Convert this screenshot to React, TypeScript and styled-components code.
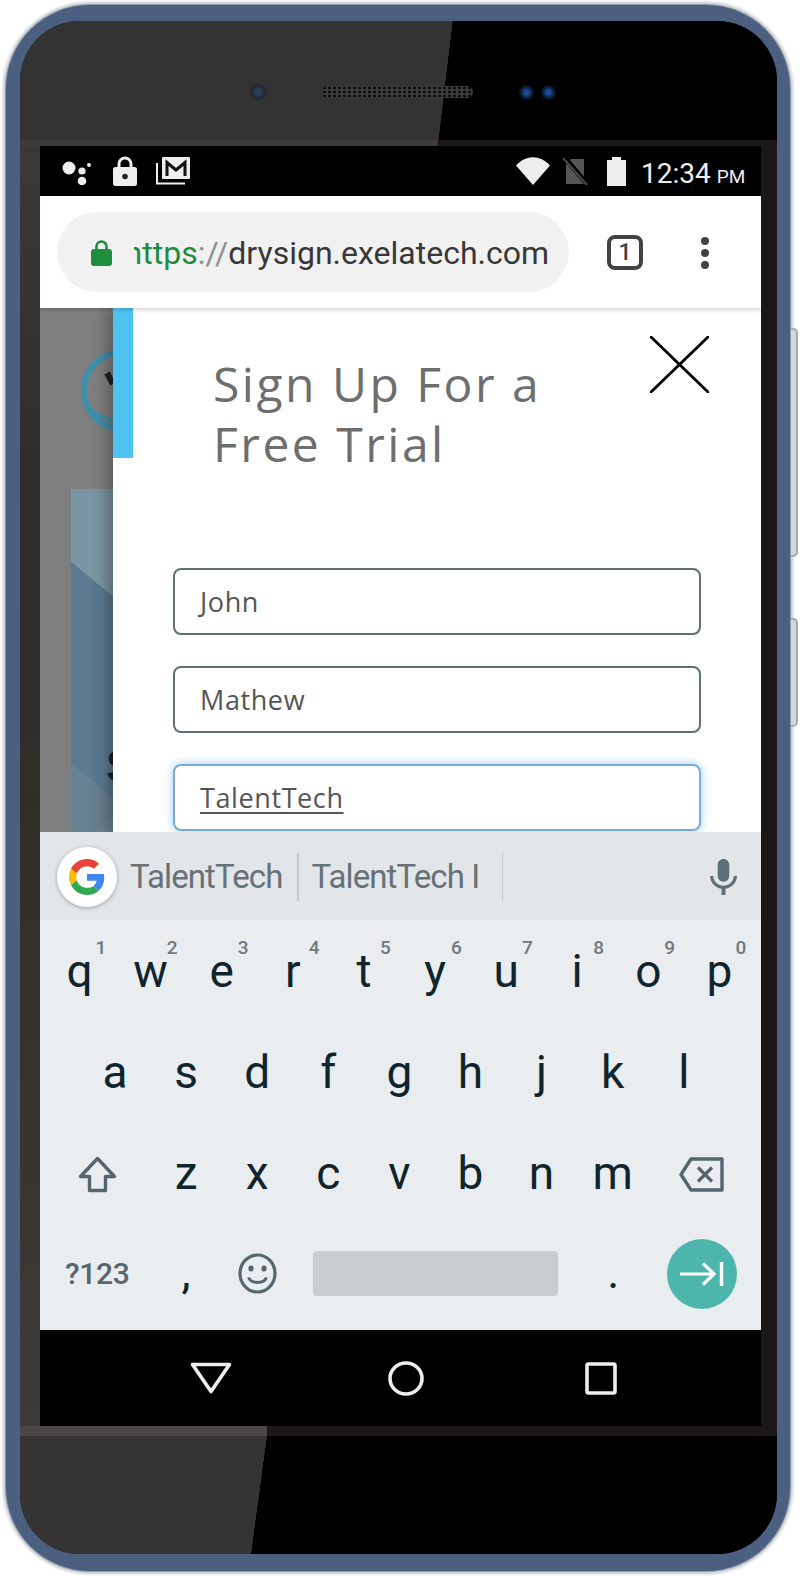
import React from "react";
import styled, { createGlobalStyle } from "styled-components";

const Global = createGlobalStyle`
  html, body { margin: 0; padding: 0; background: #fff; }
  body { font-family: "Roboto", "Liberation Sans", sans-serif; }
`;

const Page = styled.div`
  width: 803px;
  height: 1576px;
  padding: 5px 0 0 6px;
  box-sizing: border-box;
  overflow: hidden;
  background: #fff;
`;
const Shell = styled.div`
  position: relative;
  width: 784px;
  height: 1566px;
  box-sizing: border-box;
  padding: 16px 13px 17px 14px;
  border-radius: 84px;
  background: #4b6080;
  box-shadow: 0 0 0 1px #8f99a6, 0 0 3px 3px #c4c8cd;
`;
const SideButton = styled.div<{ $top: number; $h: number }>`
  position: absolute;
  right: -8px;
  top: ${(p) => p.$top}px;
  width: 5px;
  height: ${(p) => p.$h}px;
  border: 2px solid #a9a9a9;
  border-left: none;
  border-radius: 0 5px 5px 0;
  background: #d5d6d8;
`;
const Bezel = styled.div`
  height: 100%;
  border-radius: 60px;
  overflow: hidden;
  display: flex;
  flex-direction: column;
  background: #1a1716;
`;
const TopBezel = styled.div`
  height: 119px;
  flex: none;
  box-sizing: border-box;
  padding: 65px 0 0 229px;
  display: flex;
  align-items: center;
  align-content: flex-start;
  background: linear-gradient(96.84deg, #333 calc(50% + 46.5px), #000 calc(50% + 47px));
`;
const Lip = styled.div<{ $left: string; $edge: number; $h: number }>`
  height: ${(p) => p.$h}px;
  flex: none;
  background: linear-gradient(90deg, ${(p) => p.$left} ${(p) => p.$edge}px, #1b1817 ${(p) => p.$edge}px);
`;
const Camera = styled.div`
  width: 18px;
  height: 18px;
  border-radius: 50%;
  background: radial-gradient(circle, #2b3f5c 0 3px, #24282f 6px, #2e2f32 9px);
  align-self: flex-start;
  margin-top: -3px;
`;
const Speaker = styled.div`
  width: 151px;
  height: 12px;
  margin-left: 55px;
  border-radius: 6px;
  background-color: #3c3c3c;
  background-image: radial-gradient(circle, #0c0c0c 1.1px, transparent 1.6px);
  background-size: 5px 4px;
  align-self: flex-start;
`;
const Sensor = styled.div<{ $gap: number }>`
  width: 15px;
  height: 15px;
  margin-left: ${(p) => p.$gap}px;
  border-radius: 50%;
  background: radial-gradient(circle, #1e4d96 0 2px, #0d2348 5px, #050b18 7.5px);
  align-self: flex-start;
  margin-top: -1px;
`;
const Middle = styled.div`
  flex: none;
  height: 1280px;
  display: flex;
`;
const LeftStrip = styled.div`
  width: 20px;
  flex: none;
  background: linear-gradient(180deg, #3a3838 0, #2e2b2c 30%, #33302a 60%, #3d3a38 100%);
`;
const RightStrip = styled.div`
  flex: 1;
  background: #1a1716;
`;
const Screen = styled.div`
  width: 721px;
  flex: none;
  display: flex;
  flex-direction: column;
  overflow: hidden;
  background: #000;
`;
const BottomBezel = styled.div`
  flex: 1;
  background: linear-gradient(97.7deg, #353333 calc(50% - 138.5px), #000 calc(50% - 138px));
`;

/* status bar */
const StatusBar = styled.div`
  height: 50px;
  flex: none;
  display: flex;
  align-items: center;
  background: #000;
  padding-left: 21px;
  color: #eee;
`;
const Glyph = styled.svg<{ $ml?: number }>`
  flex: none;
  display: block;
  margin-left: ${(p) => p.$ml ?? 0}px;
`;
const Clock = styled.div`
  margin-left: 15px;
  font-size: 28px;
  line-height: 42px;
  white-space: nowrap;
  padding-top: 8px;
`;
const Meridiem = styled.span`
  font-size: 19px;
  margin-left: 6px;
`;

/* browser toolbar */
const Toolbar = styled.div`
  height: 112px;
  flex: none;
  display: flex;
  align-items: center;
  background: #fff;
  padding: 0 0 0 17px;
  box-sizing: border-box;
  position: relative;
  z-index: 2;
  box-shadow: 0 2px 4px rgba(0, 0, 0, 0.18);
`;
const Pill = styled.div`
  width: 512px;
  height: 80px;
  flex: none;
  box-sizing: border-box;
  display: flex;
  align-items: center;
  padding: 2px 20px 0 34px;
  border-radius: 40px;
  background: #f1f1f1;
`;
const UrlClip = styled.div`
  margin-left: 22px;
  flex: 1;
  min-width: 0;
  overflow: hidden;
  display: flex;
  justify-content: flex-end;
  white-space: nowrap;
  font-size: 32px;
  line-height: 44px;
  color: #383838;
`;
const Scheme = styled.span`
  color: #1e8e3e;
`;
const Slashes = styled.span`
  color: #8f8f8f;
`;
const TabCount = styled.div`
  width: 36px;
  height: 35px;
  flex: none;
  box-sizing: border-box;
  margin-left: 38px;
  border: 4px solid #424242;
  border-radius: 8px;
  display: flex;
  align-items: center;
  justify-content: center;
  font-size: 23px;
  font-weight: 500;
  color: #424242;
`;
const MenuDots = styled.div`
  flex: none;
  margin: 2px 0 0 58px;
  display: flex;
  flex-direction: column;
  gap: 4px;
`;
const MenuDot = styled.span`
  width: 8px;
  height: 8px;
  border-radius: 50%;
  background: #424242;
`;

/* page content */
const Content = styled.div`
  height: 524px;
  flex: none;
  display: flex;
  overflow: hidden;
  background: #7f7f7f;
`;
const Backdrop = styled.div`
  width: 73px;
  flex: none;
  overflow: hidden;
  padding-top: 41px;
  box-sizing: border-box;
  display: flex;
  flex-direction: column;
`;
const LogoRing = styled.svg`
  flex: none;
  margin-left: 41px;
  display: block;
`;
const HeroPanel = styled.div`
  margin: 57px 0 0 31px;
  width: 60px;
  flex: 1;
  padding-top: 254px;
  box-sizing: border-box;
  background: linear-gradient(219.7deg, #7a95a3 0 94px, #5a7a90 94.5px 249px, #668191 249.5px);
`;
const HeroLetter = styled.div`
  font: 700 46px/46px "Liberation Sans", sans-serif;
  color: #15222d;
  margin-left: 35px;
`;
const Modal = styled.div`
  flex: 1;
  display: flex;
  background: #fff;
  box-shadow: -6px 0 14px rgba(0, 0, 0, 0.3);
  position: relative;
`;
const Accent = styled.div`
  width: 20px;
  height: 150px;
  flex: none;
  background: #4fc3f2;
`;
const ModalBody = styled.div`
  flex: 1;
  display: flex;
  flex-direction: column;
`;
const Header = styled.div`
  display: flex;
  justify-content: space-between;
  align-items: flex-start;
  padding: 0 52px 0 80px;
`;
const Title = styled.h1`
  margin: 46px 0 0;
  font: 400 48px/60px "Open Sans", sans-serif;
  letter-spacing: 2.5px;
  color: #6e6e6e;
`;
const Close = styled.svg`
  display: block;
  margin-top: 28px;
  flex: none;
`;
const Form = styled.div`
  margin: 94px 0 0 40px;
  width: 528px;
  display: flex;
  flex-direction: column;
  gap: 31px;
`;
const Field = styled.div<{ $focus?: boolean }>`
  height: 67px;
  flex: none;
  box-sizing: border-box;
  display: flex;
  align-items: center;
  padding-left: 25px;
  border: 2px solid ${(p) => (p.$focus ? "#78acd6" : "#5f6f76")};
  border-radius: 8px;
  background: #fff;
  box-shadow: ${(p) => (p.$focus ? "0 0 10px rgba(102,175,233,.65)" : "none")};
  font: 400 27px/30px "Open Sans", sans-serif;
  letter-spacing: 0.6px;
  color: #555;
  text-decoration: ${(p) => (p.$focus ? "underline" : "none")};
  text-decoration-thickness: 2px;
  text-underline-offset: 4px;
`;

/* keyboard */
const Keyboard = styled.div`
  height: 498px;
  flex: none;
  display: flex;
  flex-direction: column;
  background: #e9edf0;
`;
const SuggestBar = styled.div`
  height: 88px;
  flex: none;
  display: flex;
  align-items: center;
  padding: 2px 0 0 17px;
  margin-bottom: 2px;
  box-sizing: border-box;
  background: #e3e6e9;
`;
const GoogleBadge = styled.div`
  width: 60px;
  height: 60px;
  flex: none;
  border-radius: 50%;
  background: #fff;
  box-shadow: 0 1px 4px rgba(0, 0, 0, 0.3);
  display: flex;
  align-items: center;
  justify-content: center;
`;
const Suggestion = styled.div<{ $w: number }>`
  width: ${(p) => p.$w}px;
  flex: none;
  box-sizing: border-box;
  padding-left: 13px;
  white-space: nowrap;
  font-size: 33px;
  line-height: 48px;
  letter-spacing: -0.9px;
  color: #677278;
  display: flex;
  align-items: center;
`;
const Divider = styled.div`
  width: 1.5px;
  height: 48px;
  flex: none;
  background: #c3c8cb;
`;
const Mic = styled.svg`
  margin-left: 207px;
  flex: none;
  display: block;
`;
const KeyRow = styled.div<{ $h?: number }>`
  height: ${(p) => p.$h ?? 101}px;
  flex: none;
  display: flex;
  padding-left: 4px;
`;
const Key = styled.div<{ $w?: number }>`
  position: relative;
  width: ${(p) => p.$w ?? 71.1}px;
  flex: none;
  display: flex;
  align-items: center;
  justify-content: center;
  font-size: 46px;
  line-height: 46px;
  color: #10242d;
  padding-bottom: 4px;
  box-sizing: border-box;
`;
const IconKey = styled(Key)`
  padding: 0;
`;
const Digit = styled.span`
  position: absolute;
  top: 15px;
  left: calc(50% + 16px);
  font-size: 19px;
  line-height: 22px;
  font-weight: 500;
  color: #6f797e;
`;
const SymbolKey = styled(Key)`
  font-size: 30px;
  font-weight: 500;
  letter-spacing: -0.3px;
  color: #56666e;
  padding: 0;
`;
const SpaceSlot = styled.div`
  width: 285px;
  flex: none;
  display: flex;
  align-items: center;
  justify-content: center;
`;
const SpaceBar = styled.div`
  width: 245px;
  height: 45px;
  border-radius: 4px;
  background: #c9cdd0;
`;
const EnterButton = styled.div`
  width: 70px;
  height: 70px;
  border-radius: 50%;
  background: #4db6ac;
  display: flex;
  align-items: center;
  justify-content: center;
`;
const NavBar = styled.div`
  height: 96px;
  flex: none;
  display: flex;
  align-items: center;
  padding-left: 73px;
  background: #000;
`;
const NavItem = styled.div`
  width: 195px;
  flex: none;
  display: flex;
  justify-content: center;
`;

const rowA = [["q", "1"], ["w", "2"], ["e", "3"], ["r", "4"], ["t", "5"], ["y", "6"], ["u", "7"], ["i", "8"], ["o", "9"], ["p", "0"]];
const rowB = ["a", "s", "d", "f", "g", "h", "j", "k", "l"];
const rowC = ["z", "x", "c", "v", "b", "n", "m"];

const StatusLeft = () => (
  <>
    <Glyph width="30" height="28" viewBox="0 0 30 28">
      <circle cx="8" cy="11" r="6.5" fill="#eee" />
      <circle cx="21" cy="14" r="3.6" fill="#eee" />
      <circle cx="21" cy="24" r="4.3" fill="#eee" />
      <circle cx="28" cy="8" r="2" fill="#eee" />
    </Glyph>
    <Glyph $ml={22} width="24" height="30" viewBox="0 0 24 30">
      <path d="M6 12V8a6 6 0 0 1 12 0v4" fill="none" stroke="#eee" strokeWidth="3" />
      <rect x="0" y="11" width="24" height="19" rx="2.5" fill="#eee" />
      <circle cx="12" cy="20.5" r="2.8" fill="#222" />
    </Glyph>
    <Glyph $ml={19} width="34" height="28" viewBox="0 0 34 28">
      <path d="M1 6V26.5H29" fill="none" stroke="#eee" strokeWidth="2" />
      <rect x="6" y="0" width="28" height="22" rx="1" fill="#eee" />
      <path d="M11 19V5.5L20 13L29 5.5V19" fill="none" stroke="#111" strokeWidth="3" />
    </Glyph>
  </>
);

const StatusRight = () => (
  <>
    <Glyph $ml={326} width="34" height="28" viewBox="0 0 34 28">
      <path d="M0 8.5C10 -2.5 24 -2.5 34 8.5L17 28Z" fill="#eee" />
    </Glyph>
    <Glyph $ml={13} width="25" height="27" viewBox="0 0 25 27">
      <path d="M3 6L8 1H21V26H3Z" fill="#565656" />
      <path d="M1 -1L25 27" stroke="#000" strokeWidth="5" />
      <path d="M0 0L24 27" stroke="#4c4c4c" strokeWidth="2" />
    </Glyph>
    <Glyph $ml={19} width="19" height="29" viewBox="0 0 19 29">
      <path d="M5 3V0H14V3H19V29H0V3Z" fill="#eee" />
    </Glyph>
  </>
);

const GoogleG = () => (
  <svg width="36" height="36" viewBox="0 0 48 48">
    <path fill="#EA4335" d="M24 9.5c3.54 0 6.71 1.22 9.21 3.6l6.85-6.85C35.9 2.38 30.47 0 24 0 14.62 0 6.51 5.38 2.56 13.22l7.98 6.19C12.43 13.72 17.74 9.5 24 9.5z" />
    <path fill="#4285F4" d="M46.98 24.55c0-1.57-.15-3.09-.38-4.55H24v9.02h12.94c-.58 2.96-2.26 5.48-4.78 7.18l7.73 6c4.51-4.18 7.09-10.36 7.09-17.65z" />
    <path fill="#FBBC05" d="M10.53 28.59c-.48-1.45-.76-2.99-.76-4.59s.27-3.14.76-4.59l-7.98-6.19C.92 16.46 0 20.12 0 24c0 3.88.92 7.54 2.56 10.78l7.97-6.19z" />
    <path fill="#34A853" d="M24 48c6.48 0 11.93-2.13 15.89-5.81l-7.73-6c-2.15 1.45-4.92 2.3-8.16 2.3-6.26 0-11.57-4.22-13.47-9.91l-7.98 6.19C6.51 42.62 14.62 48 24 48z" />
  </svg>
);

export default function App() {
  return (
    <Page>
      <Global />
      <Shell>
        <SideButton $top={323} $h={225} />
        <SideButton $top={613} $h={105} />
        <Bezel>
          <TopBezel>
            <Camera />
            <Speaker />
            <Sensor $gap={46} />
            <Sensor $gap={7} />
          </TopBezel>
          <Lip $left="#3d3b3b" $edge={418} $h={6} />
          <Middle>
            <LeftStrip />
            <Screen>
              <StatusBar>
                <StatusLeft />
                <StatusRight />
                <Clock>
                  12:34<Meridiem>PM</Meridiem>
                </Clock>
              </StatusBar>
              <Toolbar>
                <Pill>
                  <Glyph width="21" height="26" viewBox="0 0 21 26">
                    <path d="M5.5 10V6.5a5 5 0 0 1 10 0V10" fill="none" stroke="#1e8e3e" strokeWidth="2.6" />
                    <rect x="0" y="9" width="21" height="17" rx="3" fill="#1e8e3e" />
                  </Glyph>
                  <UrlClip>
                    <span>
                      <Scheme>https</Scheme>
                      <Slashes>://</Slashes>drysign.exelatech.com
                    </span>
                  </UrlClip>
                </Pill>
                <TabCount>1</TabCount>
                <MenuDots>
                  <MenuDot />
                  <MenuDot />
                  <MenuDot />
                </MenuDots>
              </Toolbar>
              <Content>
                <Backdrop>
                  <LogoRing width="83" height="83" viewBox="0 0 83 83">
                    <circle cx="41.5" cy="41.5" r="38.5" fill="none" stroke="#3f8fad" strokeWidth="6" />
                    <path d="M4 55C18 72 44 76 60 68" fill="none" stroke="#3f8fad" strokeWidth="3.5" />
                    <path d="M26 24L32 35" stroke="#1c2124" strokeWidth="6" />
                  </LogoRing>
                  <HeroPanel>
                    <HeroLetter>S</HeroLetter>
                  </HeroPanel>
                </Backdrop>
                <Modal>
                  <Accent />
                  <ModalBody>
                    <Header>
                      <Title>
                        Sign Up For a
                        <br />
                        Free Trial
                      </Title>
                      <Close width="59" height="57" viewBox="0 0 59 57">
                        <path d="M1 1L58 56M58 1L1 56" stroke="#000" strokeWidth="2.8" strokeLinecap="round" />
                      </Close>
                    </Header>
                    <Form>
                      <Field>John</Field>
                      <Field>Mathew</Field>
                      <Field $focus>TalentTech</Field>
                    </Form>
                  </ModalBody>
                </Modal>
              </Content>
              <Keyboard>
                <SuggestBar>
                  <GoogleBadge>
                    <GoogleG />
                  </GoogleBadge>
                  <Suggestion $w={180}>TalentTech</Suggestion>
                  <Divider />
                  <Suggestion $w={203}>TalentTech I</Suggestion>
                  <Divider />
                  <Mic width="27" height="36" viewBox="5 2 14 19" preserveAspectRatio="none">
                    <path fill="#5f6f78" d="M12 14c1.66 0 2.99-1.34 2.99-3L15 5c0-1.66-1.34-3-3-3S9 3.34 9 5v6c0 1.66 1.34 3 3 3zm5.3-3c0 3-2.54 5.1-5.3 5.1S6.7 14 6.7 11H5c0 3.41 2.72 6.23 6 6.72V21h2v-3.28c3.28-.48 6-3.3 6-6.72h-1.7z" />
                  </Mic>
                </SuggestBar>
                <KeyRow>
                  {rowA.map(([l, d]) => (
                    <Key key={l}>
                      {l}
                      <Digit>{d}</Digit>
                    </Key>
                  ))}
                </KeyRow>
                <KeyRow>
                  <Key $w={35.5} />
                  {rowB.map((l) => (
                    <Key key={l}>{l}</Key>
                  ))}
                </KeyRow>
                <KeyRow>
                  <IconKey $w={106.5}>
                    <svg width="39" height="37" viewBox="0 0 39 37">
                      <path d="M19.5 2.5L36.5 20.5H27.5V34.5H11.5V20.5H2.5Z" fill="none" stroke="#55656d" strokeWidth="3.4" strokeLinejoin="round" />
                    </svg>
                  </IconKey>
                  {rowC.map((l) => (
                    <Key key={l}>{l}</Key>
                  ))}
                  <IconKey $w={106}>
                    <svg width="45" height="35" viewBox="0 0 45 35">
                      <path d="M12 2H43V33H12L2 17.5Z" fill="none" stroke="#55656d" strokeWidth="3.4" strokeLinejoin="round" />
                      <path d="M19 10.5L33 24.5M33 10.5L19 24.5" stroke="#55656d" strokeWidth="3.2" />
                    </svg>
                  </IconKey>
                </KeyRow>
                <KeyRow $h={97}>
                  <SymbolKey $w={106.5}>?123</SymbolKey>
                  <Key>,</Key>
                  <IconKey>
                    <svg width="39" height="41" viewBox="0 0 39 41">
                      <ellipse cx="19.5" cy="20.5" rx="17.5" ry="18.5" fill="none" stroke="#56666e" strokeWidth="3.2" />
                      <ellipse cx="13" cy="15.5" rx="2.6" ry="3" fill="#56666e" />
                      <ellipse cx="26" cy="15.5" rx="2.6" ry="3" fill="#56666e" />
                      <path d="M10.5 24.5C13 31 26 31 28.5 24.5" fill="none" stroke="#56666e" strokeWidth="3" />
                    </svg>
                  </IconKey>
                  <SpaceSlot>
                    <SpaceBar />
                  </SpaceSlot>
                  <Key>.</Key>
                  <IconKey $w={106}>
                    <EnterButton>
                      <svg width="44" height="26" viewBox="0 0 44 26">
                        <path d="M0 13H33M23 2.5L34 13L23 23.5" fill="none" stroke="#fff" strokeWidth="3.2" />
                        <path d="M41.5 1V25" stroke="#fff" strokeWidth="3.4" />
                      </svg>
                    </EnterButton>
                  </IconKey>
                </KeyRow>
              </Keyboard>
              <NavBar>
                <NavItem>
                  <svg width="42" height="32" viewBox="0 0 42 32">
                    <path d="M2.5 2.5H39.5L21 29.5Z" fill="none" stroke="#eee" strokeWidth="3.6" strokeLinejoin="round" />
                  </svg>
                </NavItem>
                <NavItem>
                  <svg width="36" height="35" viewBox="0 0 36 35">
                    <ellipse cx="18" cy="17.5" rx="16" ry="15.5" fill="none" stroke="#eee" strokeWidth="3.6" />
                  </svg>
                </NavItem>
                <NavItem>
                  <svg width="32" height="33" viewBox="0 0 32 33">
                    <rect x="2" y="2" width="28" height="29" rx="1.5" fill="none" stroke="#eee" strokeWidth="3.6" />
                  </svg>
                </NavItem>
              </NavBar>
            </Screen>
            <RightStrip />
          </Middle>
          <Lip $left="#4a4746" $edge={247} $h={10} />
          <BottomBezel />
        </Bezel>
      </Shell>
    </Page>
  );
}
